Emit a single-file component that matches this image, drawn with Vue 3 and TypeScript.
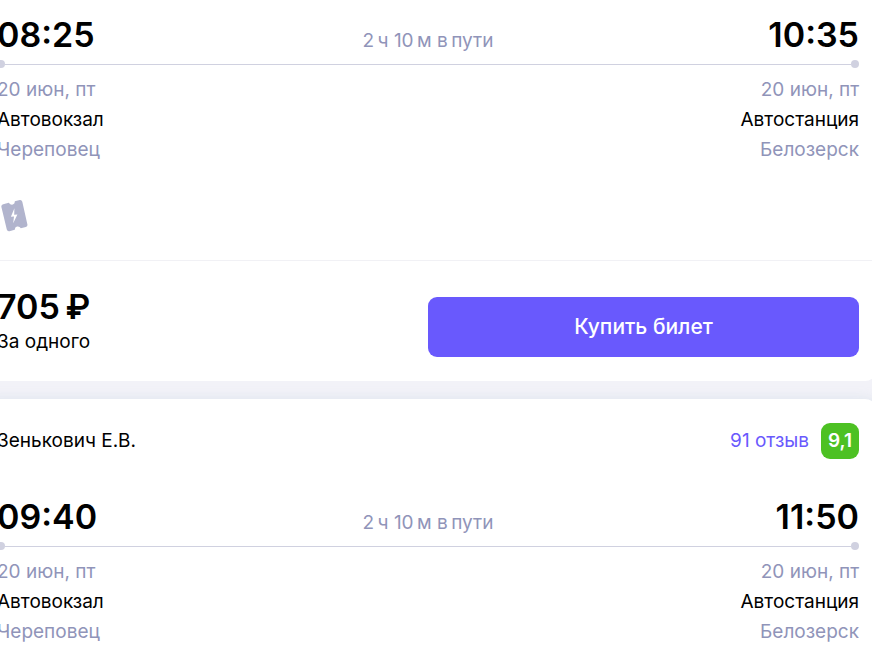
<script setup lang="ts">
interface Stop {
  time: string
  date: string
  station: string
  city: string
}

interface Trip {
  id: number
  carrier?: string
  reviews?: string
  rating?: string
  duration: string
  from: Stop
  to: Stop
  price?: string
}

// Thin space keeps a number close to its unit.
const THIN = '\u2009'
const duration = `2${THIN}ч 10${THIN}м в${THIN}пути`

const trips: Trip[] = [
  {
    id: 1,
    duration,
    from: { time: '08:25', date: '20 июн, пт', station: 'Автовокзал', city: 'Череповец' },
    to: { time: '10:35', date: '20 июн, пт', station: 'Автостанция', city: 'Белозерск' },
    price: `705${THIN}₽`,
  },
  {
    id: 2,
    carrier: 'Зенькович Е.В.',
    reviews: '91 отзыв',
    rating: '9,1',
    duration,
    from: { time: '09:40', date: '20 июн, пт', station: 'Автовокзал', city: 'Череповец' },
    to: { time: '11:50', date: '20 июн, пт', station: 'Автостанция', city: 'Белозерск' },
  },
]
</script>

<template>
  <main class="list">
    <article v-for="trip in trips" :key="trip.id" class="card">
      <header v-if="trip.carrier" class="head">
        <span class="carrier">{{ trip.carrier }}</span>
        <a class="reviews" href="#">{{ trip.reviews }}</a>
        <span class="rating">{{ trip.rating }}</span>
      </header>

      <section class="route">
        <div class="times">
          <time class="time">{{ trip.from.time }}</time>
          <span class="duration">{{ trip.duration }}</span>
          <time class="time time-end">{{ trip.to.time }}</time>
        </div>
        <div class="track">
          <i class="dot"></i>
          <i class="line"></i>
          <i class="dot"></i>
        </div>
        <div class="stops">
          <div class="stop">
            <span class="muted">{{ trip.from.date }}</span>
            <span>{{ trip.from.station }}</span>
            <span class="muted">{{ trip.from.city }}</span>
          </div>
          <div class="stop stop-end">
            <span class="muted">{{ trip.to.date }}</span>
            <span>{{ trip.to.station }}</span>
            <span class="muted">{{ trip.to.city }}</span>
          </div>
        </div>
      </section>

      <div v-if="trip.price" class="features">
        <svg class="ticket" width="28" height="34" viewBox="0 0 28 34" aria-hidden="true">
          <path
            fill="#b1b4cd"
            d="M3.2 4.2 L8.8 2.8 Q10.4 5.2 12.8 4.6 Q15 3.8 14.8 1.3 L19.8 0.1 Q21.7 -0.2 22.3 1.8 L27.4 24.4 Q27.8 26.4 25.8 27 L20.8 28.2 Q19.5 25.9 17 26.5 Q14.7 27.2 14.8 29.7 L9.4 31.2 Q7.4 31.6 6.8 29.6 L1.4 7 Q1 4.9 3.2 4.2 Z"
          />
          <path fill="#fff" d="M14.4 8.2 L10.9 16.8 L14 16.6 L13.2 23.2 L17.4 14.6 L14.2 14.8 Z" />
        </svg>
      </div>

      <footer v-if="trip.price" class="buy">
        <div class="cost">
          <strong class="price">{{ trip.price }}</strong>
          <span>За одного</span>
        </div>
        <button class="button" type="button">Купить билет</button>
      </footer>
    </article>
  </main>
</template>

<style>
body {
  margin: 0;
  background: #f2f2f8;
  overflow: hidden;
}
</style>

<style scoped>
.list {
  display: flex;
  flex-direction: column;
  gap: 18px;
  margin: 0 -5px 0 -20px;
  font-family: Inter, "Liberation Sans", sans-serif;
  font-size: 19px;
  line-height: 30px;
  color: #000;
}

.card {
  padding: 24px 18px 24px 17px;
  border-radius: 12px;
  background: #fff;
}

.card + .card {
  box-shadow: 0 0 12px rgba(190, 208, 220, 0.4);
}

.card:first-child {
  padding-top: 13px;
  border-top-left-radius: 0;
  border-top-right-radius: 0;
}

.head {
  display: flex;
  align-items: center;
  margin-bottom: 36px;
}

.carrier {
  flex: 1;
}

.reviews {
  margin-right: 12px;
  color: #6959fd;
  text-decoration: none;
}

.rating {
  width: 38px;
  border-radius: 9px;
  background: #4dc123;
  color: #fff;
  font-weight: 600;
  line-height: 36px;
  text-align: center;
}

.times {
  display: grid;
  grid-template-columns: 1fr auto 1fr;
  align-items: center;
}

.time {
  font-size: 34px;
  font-weight: 600;
  line-height: 44px;
}

.time-end {
  text-align: right;
}

.duration {
  padding-top: 12px;
  color: #9094b9;
}

.track {
  display: flex;
  align-items: center;
  margin: 3px 0 7px;
}

.dot {
  width: 8px;
  height: 8px;
  border-radius: 50%;
  background: #d0d1e0;
}

.line {
  flex: 1;
  height: 1px;
  background: #d0d1e0;
}

.stops {
  display: flex;
  justify-content: space-between;
}

.stop {
  display: flex;
  flex-direction: column;
}

.stop-end {
  text-align: right;
}

.muted {
  color: #9094b9;
}

.features {
  display: flex;
  margin: 0 -18px 0 -17px;
  padding: 35px 18px 26px 20px;
  border-bottom: 1px solid #f1f1f5;
}

.buy {
  display: grid;
  grid-template-columns: 1fr 1fr;
  align-items: end;
  padding-top: 26px;
}

.cost {
  display: flex;
  flex-direction: column;
}

.price {
  font-size: 34px;
  font-weight: 600;
  line-height: 40px;
}

.button {
  height: 60px;
  border: 0;
  border-radius: 9px;
  background: #6959fd;
  color: #fff;
  font: 500 21px/30px Inter, "Liberation Sans", sans-serif;
  cursor: pointer;
}
</style>
